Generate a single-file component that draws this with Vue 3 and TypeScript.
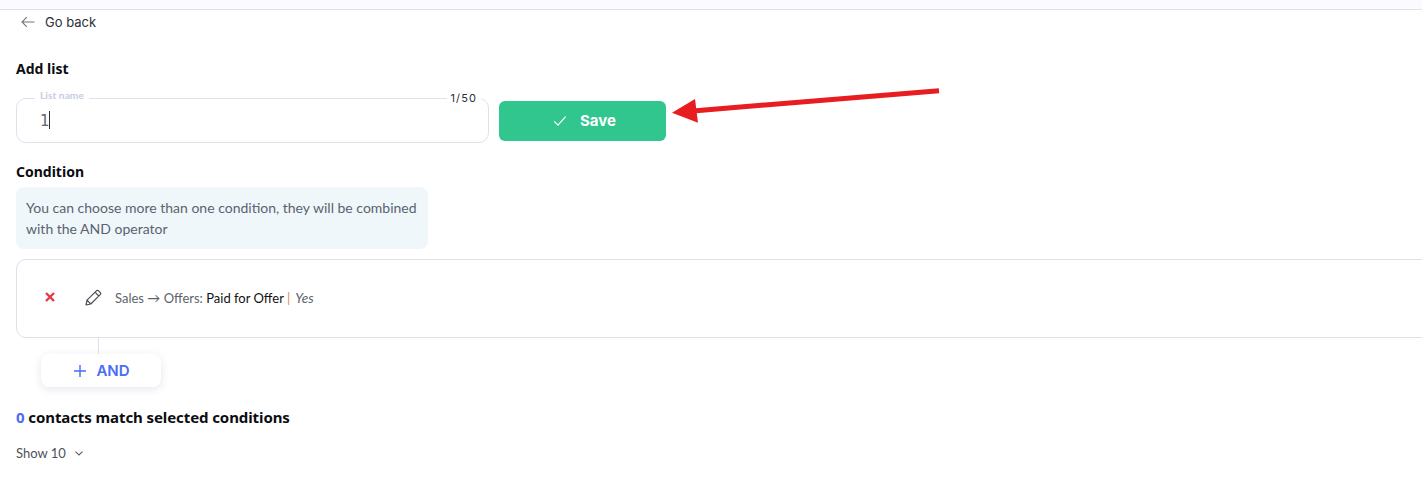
<script setup lang="ts">
const title: string = 'Add list'
</script>

<template>
  <div class="page">
    <div class="topbar"></div>
    <main class="content">
      <a class="back">
        <svg width="14" height="12" viewBox="0 0 14 12" fill="none" stroke="#71757d" stroke-width="1.1"><path d="M13.5 6H1M5.8 1.2 1 6l4.8 4.8" /></svg>
        <span>Go back</span>
      </a>
      <h2 class="heading first">{{ title }}</h2>
      <div class="form-row">
        <div class="field">
          <span class="legend">List name</span>
          <span class="counter">1/50</span>
          <span class="value">1</span><span class="caret"></span>
        </div>
        <button class="save">
          <svg width="14" height="12" viewBox="0 0 14 12" fill="none" stroke="#fff" stroke-width="1.2"><path d="M1.2 6.4 5 10.2 12.6 1.6" /></svg>
          <span>Save</span>
        </button>
      </div>
      <h2 class="heading condition">Condition</h2>
      <div class="note">You can choose more than one condition, they will be combined with the AND operator</div>
      <div class="card">
        <svg class="remove" width="10" height="10" viewBox="0 0 10 10" stroke="#e5394a" stroke-width="2.4" fill="none"><path d="M1 1 9 9M9 1 1 9" /></svg>
        <svg class="pencil" width="17" height="17" viewBox="0 0 17 17" fill="none" stroke="#4b4f57" stroke-width="1.2" stroke-linejoin="round"><path d="M1 16 2 11.2 11.4 1.8a1.6 1.6 0 0 1 2.2 0l1.6 1.6a1.6 1.6 0 0 1 0 2.2L5.8 15ZM2 11.2 5.8 15M10 3.2l3.8 3.8" /></svg>
        <span class="rule">Sales → Offers: <b>Paid for Offer</b><i class="sep">|</i><em>Yes</em></span>
      </div>
      <div class="connector"></div>
      <button class="and">
        <svg width="12" height="12" viewBox="0 0 12 12" stroke="#4a6cf7" stroke-width="1.4" fill="none"><path d="M6 0v12M0 6h12" /></svg>
        <span>AND</span>
      </button>
      <p class="match"><span class="count">0</span> contacts match selected conditions</p>
      <div class="show">
        <span>Show 10</span>
        <svg width="8" height="5" viewBox="0 0 8 5" fill="none" stroke="#5c6068" stroke-width="1.1"><path d="M.5.6 4 4 7.5.6" /></svg>
      </div>
    </main>
    <svg class="annotation" width="290" height="55" viewBox="0 0 290 55">
      <path d="M269 18.7 26 38.7" stroke="#e71d1f" stroke-width="5" fill="none" />
      <path d="M2 40.7 25 27 28 50.7 Z" fill="#e71d1f" />
    </svg>
  </div>
</template>

<style>
html, body { margin: 0; background: #fff; overflow: hidden; }
</style>

<style scoped>
.page { position: relative; width: 1422px; height: 490px; overflow: hidden; font-family: Lato, "Liberation Sans", sans-serif; color: #111; }
.topbar { height: 9px; background: #fbfaff; border-bottom: 1px solid #e0deea; }
.content { padding: 0 0 0 16px; }
.back { display: flex; align-items: center; gap: 10px; height: 24px; padding-left: 5px; font: 13px/24px Inter, sans-serif; color: #2b2f36; }
.heading { margin: 0; font: 700 14px/18px "Noto Sans", sans-serif; color: #0b0d12; }
.first { margin-top: 26px; }
.form-row { display: flex; align-items: center; gap: 10px; margin-top: 20px; }
.field { position: relative; box-sizing: border-box; width: 473px; height: 45px; border: 1px solid #e0e0ec; border-radius: 10px; padding: 12px 0 0 23px; display: flex; align-items: flex-start; }
.legend { position: absolute; left: 18px; top: -10px; padding: 0 5px; background: #fff; font: 700 10.3px/12px Lato, sans-serif; color: #c6cee0; }
.counter { position: absolute; right: 7px; top: -8px; padding: 0 4px; background: #fff; font: 11px/14px Inter, sans-serif; letter-spacing: 1.1px; color: #2b2f36; }
.value { font: 15px/20px "DejaVu Sans", sans-serif; color: #666; }
.caret { width: 1px; height: 18px; background: #333; margin-left: -1px; }
.save { box-sizing: border-box; width: 167px; height: 40px; border: 0; border-radius: 6px; background: #31c68e; color: #fff; display: flex; align-items: center; justify-content: center; gap: 13px; font: 700 15px Inter, sans-serif; padding: 0 0 0 4px; }
.condition { margin-top: 20px; }
.note { box-sizing: border-box; width: 412px; height: 62px; margin-top: 6px; padding: 10px; background: #eff7fb; border-radius: 8px; font: 14px/21px Lato, sans-serif; color: #5a6270; }
.card { box-sizing: border-box; width: 1440px; height: 79px; margin-top: 10px; border: 1px solid #e0e0ec; border-radius: 10px; display: flex; align-items: center; padding-left: 28px; }
.pencil { margin-left: 30px; margin-top: -2px; }
.remove { margin-top: -4px; }
.rule { margin-left: 13px; margin-top: -2px; font: 13px/18px Lato, sans-serif; color: #5e636b; }
.rule b { font-weight: 400; color: #111; }
.sep { font-style: normal; color: #d98a4a; margin: 0 5px 0 3px; }
.rule em { font-style: italic; font-size: 13.5px; }
.connector { width: 1px; height: 16px; margin-left: 82px; background: #e0e0ec; }
.and { box-sizing: border-box; width: 120px; height: 33px; margin-left: 25px; border: 0; border-radius: 8px; background: #fff; box-shadow: 0 2px 8px rgba(70, 80, 140, .14); display: flex; align-items: center; justify-content: center; gap: 10px; font: 600 15px Inter, sans-serif; color: #4a6cf7; padding: 0 0 0 2px; }
.match { margin: 20px 0 0; font: 700 15px/20px "Noto Sans", sans-serif; letter-spacing: -.09px; color: #0b0d12; }
.count { color: #4a6cf7; }
.show { display: flex; align-items: center; gap: 9px; margin-top: 16px; font: 13px/20px Lato, sans-serif; color: #4d5259; }
.annotation { position: absolute; left: 670px; top: 72px; }
</style>
